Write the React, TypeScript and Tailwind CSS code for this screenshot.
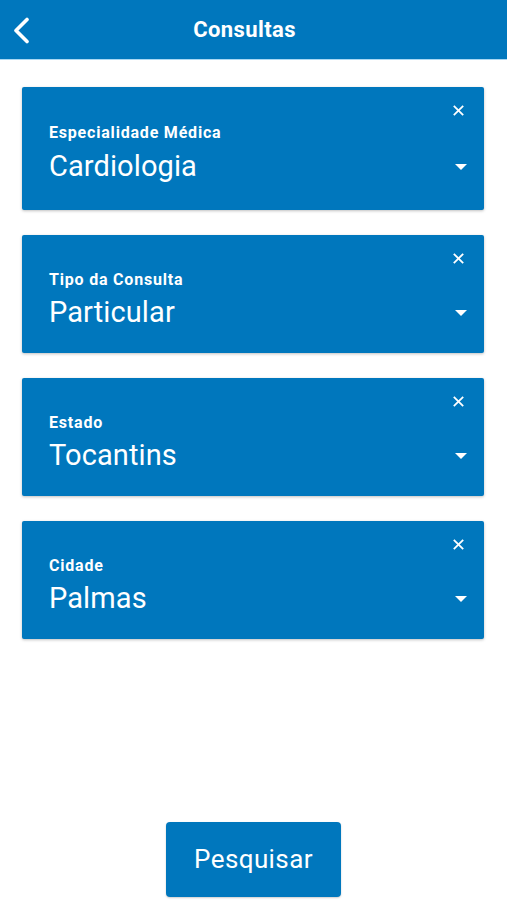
import React from "react";

function Field({ label, value, tall }: { label: string; value: string; tall?: boolean }) {
  return (
    <div
      className={`relative bg-[#0077bd] rounded-[2px] shadow-[0_1px_3px_rgba(0,0,0,0.25)] pl-[27px] pr-[17px] ${
        tall ? "pt-[36px] pb-[27px]" : "pt-[35px] pb-[24px]"
      }`}
    >
      <svg
        className="absolute right-[20px] top-[18px]"
        width="11"
        height="11"
        viewBox="0 0 11 11"
        fill="none"
        stroke="white"
        strokeWidth="1.8"
      >
        <line x1="0.8" y1="0.8" x2="10.2" y2="10.2" />
        <line x1="10.2" y1="0.8" x2="0.8" y2="10.2" />
      </svg>
      <div className="text-[16px] leading-[19px] font-bold text-white tracking-[0.8px]">{label}</div>
      <div className={`flex items-center justify-between ${tall ? "mt-[7px]" : "mt-[6px]"}`}>
        <div className="text-[29px] leading-[34px] text-white tracking-[0.1px]">{value}</div>
        <div className="w-0 h-0 border-l-[6px] border-r-[6px] border-t-[6px] border-l-transparent border-r-transparent border-t-white mt-[2px]" />
      </div>
    </div>
  );
}

export default function App() {
  return (
    <div className="h-[900px] bg-white flex flex-col" style={{ fontFamily: "Roboto, 'Liberation Sans', sans-serif" }}>
      <div className="h-[60px] bg-[#0077bd] border-b border-[#a9d8f3] flex items-center relative shrink-0">
        <svg
          className="absolute left-[13px] top-[17px]"
          width="17"
          height="27"
          viewBox="0 0 17 27"
          fill="none"
          stroke="white"
          strokeWidth="3.6"
          strokeLinecap="round"
          strokeLinejoin="round"
        >
          <polyline points="14,2.5 3,13.5 14,24.5" />
        </svg>
        <div className="flex-1 text-center text-white font-bold text-[22px] leading-[26px] tracking-[0.4px] pr-[18px]">Consultas</div>
      </div>
      <div className="flex flex-col gap-[25px] px-[22px] pr-[23px] pt-[27px]">
        <Field label="Especialidade Médica" value="Cardiologia" tall />
        <Field label="Tipo da Consulta" value="Particular" />
        <Field label="Estado" value="Tocantins" />
        <Field label="Cidade" value="Palmas" />
      </div>
      <div className="flex-1" />
      <div className="flex justify-center pb-[3px]">
        <button className="w-[175px] h-[75px] bg-[#0077bd] rounded-[4px] text-white text-[26px] tracking-[0.4px] shadow-[0_1px_2px_rgba(0,0,0,0.2)]">
          Pesquisar
        </button>
      </div>
    </div>
  );
}
